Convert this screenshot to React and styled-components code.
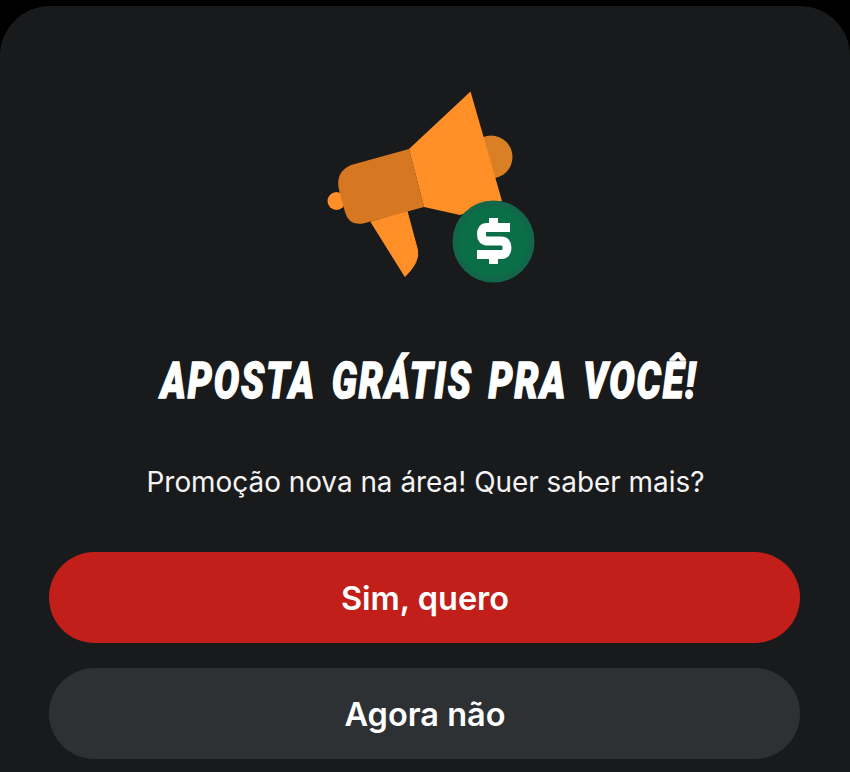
import React from 'react'
import styled, { createGlobalStyle } from 'styled-components'

const GlobalStyle = createGlobalStyle`
  html, body {
    margin: 0;
    height: 100%;
    background: #000;
    overflow: hidden;
  }
`

function MegaphoneIcon() {
  return (
    <svg width="220" height="200" viewBox="320 85 220 200" aria-hidden="true">
      <circle cx="336.500" cy="201" r="9" fill="#ff8f26" />
      <circle cx="491" cy="157" r="21.500" fill="#d97f26" />
      <path
        d="M371 222 L407 211 L417.500 250 Q420 262 405 276.500 Z"
        fill="#ff8f26"
        stroke="#ff8f26"
        strokeLinejoin="round"
        strokeWidth="1"
      />
      <path
        d="M409 149 L424 207 L365 223 Q349 227 345 212 L339 190 Q335 172 351 165 Z"
        fill="#d67722"
      />
      <path d="M470.500 91.500 L502 201 L460 215 L424 207 L409 149 Z" fill="#ff8f26" />
      <circle cx="493.500" cy="241.500" r="41" fill="#12664a" />
      <circle cx="493.500" cy="241.500" r="35.500" fill="#0a6e47" />
      <path d="M489 218 H498 V226 H489 Z M489 256 H498 V264 H489 Z" fill="#fff" />
      <path
        d="M510 227.500 H487 Q481.500 227.500 481.500 234 Q481.500 241 487 241 H501 Q507 241 507 248 Q507 254.500 501 254.500 H477"
        fill="none"
        stroke="#fff"
        strokeWidth="9"
      />
    </svg>
  )
}

export default function App() {
  return (
    <>
      <GlobalStyle />
      <Screen>
        <Sheet>
          <IconWrap>
            <MegaphoneIcon />
          </IconWrap>
          <Title>APOSTA GRÁTIS PRA VOCÊ!</Title>
          <Message>Promoção nova na área! Quer saber mais?</Message>
          <Actions>
            <ActionButton $primary>Sim, quero</ActionButton>
            <ActionButton>Agora não</ActionButton>
          </Actions>
        </Sheet>
      </Screen>
    </>
  )
}

const Screen = styled.div`
  width: 850px;
  height: 772px;
  padding-top: 6px;
  box-sizing: border-box;
  overflow: hidden;
`

const Sheet = styled.div`
  height: 766px;
  box-sizing: border-box;
  padding: 79px 50px 0 49px;
  background: #191a1c;
  border-radius: 50px 50px 0 0;
  display: flex;
  flex-direction: column;
  align-items: center;
`

const IconWrap = styled.div`
  height: 200px;
  margin-left: 10px;
  svg {
    display: block;
  }
`

const Title = styled.h1`
  margin: 66px 0 0 8px;
  height: 60px;
  line-height: 60px;
  font-family: "Roboto", "Liberation Sans", sans-serif;
  font-size: 50px;
  font-weight: 900;
  font-style: italic;
  letter-spacing: 2.5px;
  word-spacing: 6px;
  white-space: nowrap;
  color: #fff;
  -webkit-text-stroke: 1.400px #fff;
  transform: scaleX(0.76);
`

const Message = styled.p`
  margin: 53px 0 0 2px;
  font-family: "Inter", "Liberation Sans", sans-serif;
  font-size: 27.900px;
  line-height: 36px;
  font-weight: 400;
  white-space: nowrap;
  color: #f4f4f4;
`

const Actions = styled.div`
  margin-top: 52px;
  align-self: stretch;
  display: flex;
  flex-direction: column;
  gap: 25px;
`

const ActionButton = styled.button`
  height: 91px;
  padding: 2px 0 0 1px;
  border: none;
  border-radius: 46px;
  background: ${props => (props.$primary ? '#c21f1a' : '#2e3134')};
  color: #fff;
  font-family: "Inter", "Liberation Sans", sans-serif;
  font-size: 32.500px;
  font-weight: 600;
`
